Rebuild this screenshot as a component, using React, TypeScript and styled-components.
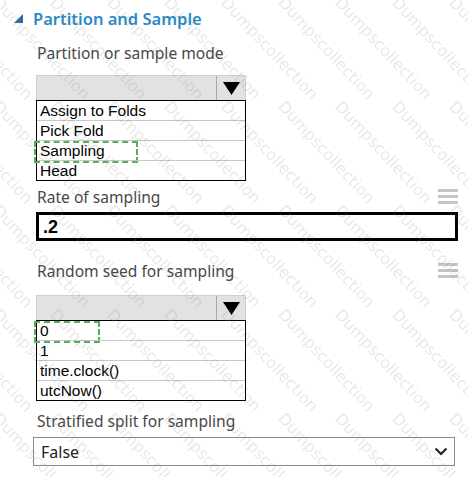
import { FC } from "react";
import styled, { createGlobalStyle } from "styled-components";

const GlobalStyle = createGlobalStyle`
  html, body {
    margin: 0;
    padding: 0;
    background: #ffffff;
  }
  body {
    font-family: "Noto Sans", "Open Sans", sans-serif;
  }
`;

const modeOptions = ["Assign to Folds", "Pick Fold", "Sampling", "Head"];
const seedOptions = ["0", "1", "time.clock()", "utcNow()"];

// watermark grid: columns every 57px, rows every 104px
const marks: { x: number; y: number }[] = [];
for (let r = -1; r < 5; r++) {
  for (let c = -3; c < 9; c++) {
    marks.push({ x: 3 + c * 57, y: -7 + r * 104 });
  }
}

interface ListProps {
  options: string[];
  marked: number;
  markWidth: number;
  offset?: number;
}

const DropList: FC<ListProps> = ({ options, marked, markWidth, offset = 12 }) => (
  <Combo offset={offset}>
    <ComboBar>
      <ComboArrow>
        <svg width="17" height="13" viewBox="0 0 17 13">
          <path d="M0 0 L17 0 L8.5 13 Z" fill="#000" />
        </svg>
      </ComboArrow>
    </ComboBar>
    <List>
      {options.map((o, i) => (
        <Item key={o}>
          {o}
          {i === marked && <Marker style={{ width: markWidth }} />}
        </Item>
      ))}
    </List>
  </Combo>
);

const Hamburger = () => (
  <svg width="20" height="17" viewBox="0 0 20 17">
    <rect x="0" y="0" width="20" height="3" fill="#c6c6c6" />
    <rect x="0" y="6" width="20" height="3" fill="#c6c6c6" />
    <rect x="0" y="12" width="20" height="3" fill="#c6c6c6" />
  </svg>
);

const App: FC = () => {
  return (
    <Page>
      <GlobalStyle />
      <Header>
        <svg width="9" height="9" viewBox="0 0 9 9">
          <path d="M9 0 L9 9 L0 9 Z" fill="#2e6aa8" />
        </svg>
        <Title>Partition and Sample</Title>
      </Header>

      <Section gap={13}>
        <Label>Partition or sample mode</Label>
        <DropList options={modeOptions} marked={2} markWidth={100} />
      </Section>

      <Section gap={6}>
        <LabelRow>
          <Label>Rate of sampling</Label>
          <Hamburger />
        </LabelRow>
        <RateInput>.2</RateInput>
      </Section>

      <Section gap={20}>
        <LabelRow>
          <Label>Random seed for sampling</Label>
          <Hamburger />
        </LabelRow>
        <DropList options={seedOptions} marked={0} markWidth={62} offset={14} />
      </Section>

      <Section gap={10}>
        <Label>Stratified split for sampling</Label>
        <Select>
          <span>False</span>
          <svg width="14" height="9" viewBox="0 0 14 9">
            <path d="M1.5 1.5 L7 7 L12.5 1.5" fill="none" stroke="#222" strokeWidth="2.2" />
          </svg>
        </Select>
      </Section>

      <Watermark>
        {marks.map((m, i) => (
          <Mark key={i} style={{ left: m.x, top: m.y }}>
            Dumpscollection
          </Mark>
        ))}
      </Watermark>
    </Page>
  );
};

export default App;

const Page = styled.div`
  position: relative;
  width: 468px;
  height: 477px;
  overflow: hidden;
  box-sizing: border-box;
  padding: 6px 10px 0 14px;
  display: flex;
  flex-direction: column;
`;

const Header = styled.div`
  display: flex;
  align-items: center;
  gap: 10px;
  height: 24px;
`;

const Title = styled.span`
  color: #2b8ac6;
  font-size: 16.5px;
  font-weight: 600;
`;

const Section = styled.div<{ gap: number }>`
  display: flex;
  flex-direction: column;
  padding-left: 22px;
  margin-top: ${(p) => p.gap}px;
`;

const LabelRow = styled.div`
  display: flex;
  justify-content: space-between;
  align-items: center;
`;

const Label = styled.div`
  color: #474747;
  font-size: 15.6px;
  line-height: 20px;
  padding-left: 1px;
`;

const Combo = styled.div<{ offset: number }>`
  width: 210px;
  margin-top: ${(p) => p.offset}px;
  font-family: "Liberation Sans", Arial, sans-serif;
`;

const ComboBar = styled.div`
  height: 24px;
  background: #e2e2e2;
  border: 1px solid #cfcfcf;
  border-bottom: none;
  display: flex;
  justify-content: flex-end;
`;

const ComboArrow = styled.div`
  width: 28px;
  border-left: 1px solid #a8a8a8;
  display: flex;
  align-items: center;
  justify-content: center;
`;

const List = styled.div`
  border: 1.5px solid #000;
`;

const Item = styled.div`
  position: relative;
  height: 19px;
  line-height: 20px;
  padding-left: 3px;
  font-size: 15.5px;
  color: #000;
  border-top: 1px solid #c8c8c8;
  &:first-child {
    border-top: none;
  }
`;

const Marker = styled.div`
  position: absolute;
  left: -3px;
  top: 0;
  height: 18px;
  border: 2px dashed #5aad5a;
`;

const RateInput = styled.div`
  margin-top: 5px;
  height: 23px;
  border: 3px solid #000;
  font-family: "Liberation Sans", Arial, sans-serif;
  font-weight: bold;
  font-size: 18px;
  line-height: 24px;
  padding-left: 4px;
`;

const Select = styled.div`
  margin-top: 6px;
  margin-left: -3px;
  width: 422px;
  height: 29px;
  box-sizing: border-box;
  border: 1.5px solid #8a8a8a;
  display: flex;
  align-items: center;
  justify-content: space-between;
  padding: 0 6px 0 7px;
  color: #222;
  font-size: 16px;
`;

const Watermark = styled.div`
  position: absolute;
  inset: 0;
  pointer-events: none;
`;

const Mark = styled.span`
  position: absolute;
  transform: rotate(47deg);
  transform-origin: left top;
  font-family: "DejaVu Sans", sans-serif;
  font-size: 16px;
  white-space: nowrap;
  color: rgba(120, 120, 120, 0.18);
`;
